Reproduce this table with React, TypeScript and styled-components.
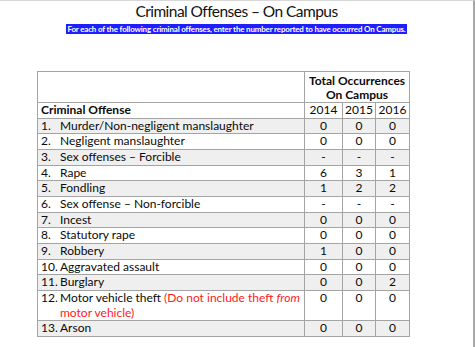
import React from 'react'
import styled, { createGlobalStyle } from 'styled-components'

interface Offense {
    num: string
    label: string
    note?: boolean
    counts: [string, string, string]
}

const offenses: Offense[] = [
    { num: '1.', label: 'Murder/Non-negligent manslaughter', counts: ['0', '0', '0'] },
    { num: '2.', label: 'Negligent manslaughter', counts: ['0', '0', '0'] },
    { num: '3.', label: 'Sex offenses \u2013 Forcible', counts: ['-', '-', '-'] },
    { num: '4.', label: 'Rape', counts: ['6', '3', '1'] },
    { num: '5.', label: 'Fondling', counts: ['1', '2', '2'] },
    { num: '6.', label: 'Sex offense \u2013 Non-forcible', counts: ['-', '-', '-'] },
    { num: '7.', label: 'Incest', counts: ['0', '0', '0'] },
    { num: '8.', label: 'Statutory rape', counts: ['0', '0', '0'] },
    { num: '9.', label: 'Robbery', counts: ['1', '0', '0'] },
    { num: '10.', label: 'Aggravated assault', counts: ['0', '0', '0'] },
    { num: '11.', label: 'Burglary', counts: ['0', '0', '2'] },
    { num: '12.', label: 'Motor vehicle theft', note: true, counts: ['0', '0', '0'] },
    { num: '13.', label: 'Arson', counts: ['0', '0', '0'] },
]

export default function App() {
    return (
        <>
            <GlobalStyle />
            <Page>
                <Title>Criminal Offenses – On Campus</Title>
                <Subtitle>
                    <Highlight>
                        For each of the following criminal offenses, enter the number reported to have occurred On Campus.
                    </Highlight>
                </Subtitle>
                <Table>
                    <colgroup>
                        <col style={{ width: 267 }} />
                        <col style={{ width: 38 }} />
                        <col style={{ width: 33 }} />
                        <col style={{ width: 34 }} />
                    </colgroup>
                    <tbody>
                        <tr>
                            <Cell />
                            <HeadCell colSpan={3}>
                                Total Occurrences
                                <br />
                                On Campus
                            </HeadCell>
                        </tr>
                        <tr>
                            <LabelCell $bold>Criminal Offense</LabelCell>
                            <NumCell>2014</NumCell>
                            <NumCell>2015</NumCell>
                            <NumCell>2016</NumCell>
                        </tr>
                        {offenses.map((o, i) => (
                            <Row key={o.num} $shaded={i % 2 === 0}>
                                <LabelCell>
                                    <Entry>
                                        <Num>{o.num}</Num>
                                        <span>
                                            {o.label}
                                            {o.note && (
                                                <Note>
                                                    {' '}(Do not include theft <em>from</em> motor vehicle)
                                                </Note>
                                            )}
                                        </span>
                                    </Entry>
                                </LabelCell>
                                {o.counts.map((c, j) => (
                                    <NumCell key={j}>{c}</NumCell>
                                ))}
                            </Row>
                        ))}
                    </tbody>
                </Table>
            </Page>
        </>
    )
}

const GlobalStyle = createGlobalStyle`
    html, body {
        margin: 0;
        padding: 0;
        background: #ffffff;
    }
    body {
        font-family: Lato, "Open Sans", sans-serif;
        color: #0a0a0a;
    }
`;

const Page = styled.div`
    width: 475px;
    height: 347px;
    box-sizing: border-box;
    border-top: 1px solid #d8d8d8;
    border-right: 2px solid #a8a8a8;
    overflow: hidden;
`;

const Title = styled.h1`
    margin: 1px 0 0;
    text-align: center;
    font-weight: 400;
    font-size: 15.5px;
    letter-spacing: -0.55px;
    line-height: 19px;
    color: #111;
`;

const Subtitle = styled.div`
    text-align: center;
    line-height: 9px;
    height: 9px;
`;

const Highlight = styled.span`
    background: #1e1eff;
    color: #fff;
    font-size: 8px;
    font-weight: 700;
    letter-spacing: -0.18px;
    padding: 0 1px;
`;

const Table = styled.table`
    margin: 41px 0 0 37px;
    border-collapse: collapse;
    table-layout: fixed;
    width: 372px;
    font-size: 12px;
    line-height: 14.65px;
`;

const Cell = styled.td`
    border: 1px solid #a4a4a4;
    padding: 0;
    height: 29px;
`;

const HeadCell = styled.th`
    border: 1px solid #a4a4a4;
    padding: 2px 0 0;
    font-weight: 700;
    text-align: center;
    line-height: 14px;
    vertical-align: top;
`;

const Row = styled.tr<{ $shaded: boolean }>`
    background: ${p => (p.$shaded ? '#efefef' : '#ffffff')};
`;

const LabelCell = styled.td<{ $bold?: boolean }>`
    border: 1px solid #a4a4a4;
    padding: 0 0 0 3px;
    text-align: left;
    vertical-align: top;
    font-weight: ${p => (p.$bold ? 700 : 400)};
`;

const NumCell = styled.td`
    border: 1px solid #a4a4a4;
    padding: 0;
    text-align: center;
    vertical-align: top;
`;

const Entry = styled.div`
    display: flex;
`;

const Num = styled.span`
    flex: 0 0 19px;
`;

const Note = styled.span`
    color: #ff1a1a;
`;
